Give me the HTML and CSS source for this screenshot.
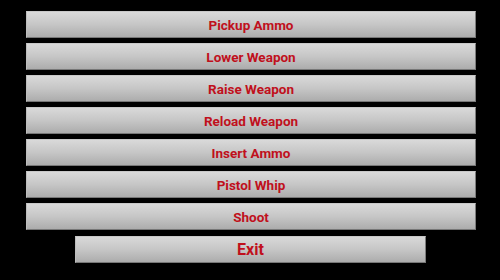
FILE: index.html
```html
<!DOCTYPE html>
<html>
<head>
<meta charset="utf-8">
<link rel="stylesheet" href="styles.css">
</head>
<body>
<div class="menu">
  <div class="btn">Pickup Ammo</div>
  <div class="btn">Lower Weapon</div>
  <div class="btn">Raise Weapon</div>
  <div class="btn">Reload Weapon</div>
  <div class="btn">Insert Ammo</div>
  <div class="btn">Pistol Whip</div>
  <div class="btn">Shoot</div>
  <div class="btn exit">Exit</div>
</div>
</body>
</html>
```

FILE: styles.css
```css
html, body {
  margin: 0;
  padding: 0;
  background: #000;
  width: 500px;
  height: 280px;
  overflow: hidden;
}
.menu {
  display: flex;
  flex-direction: column;
  align-items: center;
  gap: 5px;
  padding: 11px 0 0 2px;
}
.btn {
  box-sizing: border-box;
  width: 450px;
  height: 27px;
  display: flex;
  align-items: center;
  justify-content: center;
  background: linear-gradient(to bottom, #d9d9d9 0%, #c6c6c6 50%, #acacac 100%);
  border: 1px solid #a8a8a8;
  border-top-color: #c8c8c8;
  border-left-color: #bdbdbd;
  border-right-color: #7c7c7c;
  border-bottom-color: #777;
  font-family: Roboto, "Liberation Sans", sans-serif;
  font-weight: bold;
  font-size: 13.5px;
  color: #c0101c;
}
.exit {
  width: 351px;
  margin-top: 1px;
  margin-left: -1px;
  font-size: 16px;
}
```
